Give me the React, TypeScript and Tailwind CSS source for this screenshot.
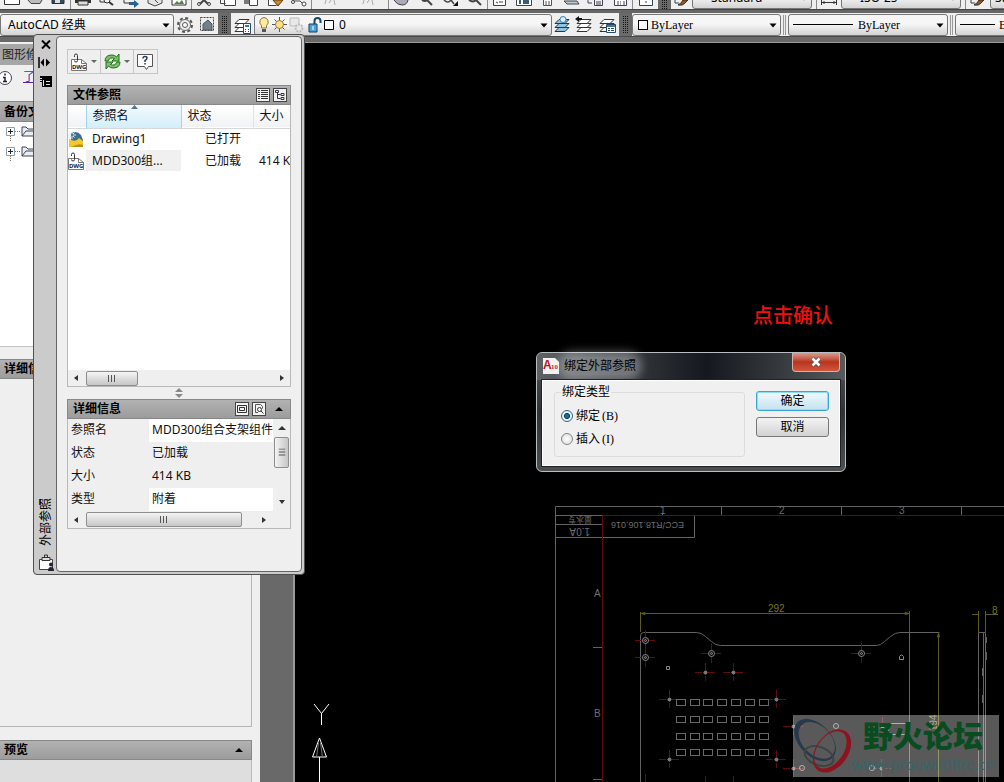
import React from "react";

const UI = "font-['Noto_Sans','Noto_Sans_CJK_SC',sans-serif]";
const SERIF = "font-['Liberation_Serif','Noto_Sans_CJK_SC',serif]";

function Down({ className = "" }: { className?: string }) {
  return (
    <svg className={className} width="8" height="5" viewBox="0 0 8 5" aria-hidden="true">
      <path d="M0.5 0.5h7L4 4.5z" fill="#000" />
    </svg>
  );
}

function Arrow({ dir, color = "#333" }: { dir: "up" | "down" | "left" | "right"; color?: string }) {
  const d = {
    up: "M0 6L4 2L8 6z",
    down: "M1 2L4 6L7 2z",
    left: "M6 1L2 4L6 7z",
    right: "M2 1L6 4L2 7z",
  }[dir];
  return (
    <svg width="8" height="8" viewBox="0 0 8 8" aria-hidden="true">
      <path d={d} fill={color} />
    </svg>
  );
}

function Combo({
  label,
  value,
  className = "",
  selectClass = "",
  children,
}: {
  label: string;
  value: string;
  className?: string;
  selectClass?: string;
  children?: React.ReactNode;
}) {
  return (
    <div className={`relative h-[22px] shrink-0 ${className}`}>
      <select
        aria-label={label}
        className={`block h-full w-full appearance-none rounded-[3px] border border-[#777] bg-linear-to-b from-[#f6f6f6] from-45% to-[#d3d3d3] text-xs text-black ${selectClass}`}
      >
        <option>{value}</option>
      </select>
      <div className="pointer-events-none absolute inset-y-0 left-0 flex items-center">{children}</div>
      <Down className="pointer-events-none absolute top-[9px] right-1" />
    </div>
  );
}

function Grip() {
  return (
    <div className="flex h-full w-[13px] shrink-0 items-center justify-center bg-[#6a6a6a]">
      <svg width="7" height="18" viewBox="0 0 7 18" aria-hidden="true">
        <path d="M1.5 0v18M3.5 0v18M5.5 0v18" stroke="#151515" strokeDasharray="1 1" />
      </svg>
    </div>
  );
}

function Rule() {
  return <div className="h-full w-px shrink-0 bg-[#8a8a8a]" />;
}

const topGroups: { width: string; icons: React.ReactNode[] }[] = [
  {
    width: "w-[70px]",
    icons: [
      <path key="new" d="M1.500 0v4.500h15V0" fill="#fff" stroke="#333" />,
      <path key="open" d="M2 0l3 3.500h9L16 0" fill="#bbb" stroke="#444" />,
      <g key="save">
        <path d="M3 0v3.500h12V0" fill="#34495e" stroke="#233" />
        <path d="M6 0h5v3H6z" fill="#ddd" />
      </g>,
    ],
  },
  {
    width: "w-[120px]",
    icons: [
      <g key="print">
        <path d="M1 0h16v3H1z" fill="#333" />
        <path d="M4 1h10v4H4z" fill="#ddd" stroke="#333" />
      </g>,
      <g key="preview" fill="none" stroke="#333">
        <path d="M2 0v2h5" />
        <circle cx="9" cy="0" r="3" />
        <path d="M11 2l4 3" strokeWidth="2" />
      </g>,
      <g key="publish">
        <path d="M2 0v3h6" fill="none" stroke="#333" />
        <path d="M7 2h5v-2l5 4-5 4V5H7z" fill="#2a5f8e" />
      </g>,
      <path key="dwf" d="M2 0v3l7 3 7-3V0M9 0l3 3" fill="#e5e5e5" stroke="#444" />,
      <g key="image">
        <path d="M2 0v5h14V0" fill="#fff" stroke="#333" />
        <path d="M4 4l3-3 2 2 3-3 2 4z" fill="#458a3c" />
      </g>,
    ],
  },
  {
    width: "w-[119px]",
    icons: [
      <g key="cut" fill="none" stroke="#444" strokeWidth="2">
        <path d="M9 0L5 4M9 0l4 4" />
        <circle cx="4" cy="4" r="1.500" strokeWidth="1" />
        <circle cx="14" cy="4" r="1.500" strokeWidth="1" />
      </g>,
      <path key="copy" d="M1.500 0v3.500h5M5.500 0v5.500h11V0" fill="#fff" stroke="#444" />,
      <g key="paste">
        <path d="M2 0h7v4H2z" fill="#777" />
        <path d="M7.500 0v5.500h8V0" fill="#fff" stroke="#444" />
      </g>,
      <g key="match">
        <path d="M2.500 0v5.500h8" fill="#fff" stroke="#444" />
        <path d="M7 0l5 6 5-6z" fill="#c98a2b" stroke="#5b3a10" />
      </g>,
      <g key="block" fill="#fff" stroke="#444">
        <path d="M2 1h8l3 3" />
        <circle cx="3" cy="2" r="1.500" />
        <circle cx="14" cy="4" r="2" />
      </g>,
    ],
  },
  {
    width: "w-[76px]",
    icons: [
      <path key="undo" d="M4 0L3 4M9 0L7 3M12 0l1 5" fill="none" stroke="#aaa" />,
      <path key="redo" d="M4 0L3 4M9 0L7 3M12 0l1 5" fill="none" stroke="#aaa" />,
    ],
  },
  {
    width: "w-[98px]",
    icons: [
      <path key="pan" d="M2 0q3 5 8 5q5 0 6-5" fill="#aab" stroke="#444" />,
      <path key="zoom" d="M5 0q3 2 5 0l5 5" fill="none" stroke="#444" strokeWidth="2" />,
      <g key="window">
        <path d="M3 0q4 4 7 0l3 4" fill="none" stroke="#444" strokeWidth="1.500" />
        <path d="M17 1v5h-5z" fill="#111" />
      </g>,
      <path key="previous" d="M3 0q4 3 7 0l5 5" fill="none" stroke="#444" strokeWidth="2" />,
    ],
  },
  {
    width: "w-[144px]",
    icons: [
      <path key="properties" d="M2.500 0v5.500h12V0M5 2l2 1M8 2h4" fill="#fff" stroke="#444" />,
      <g key="center">
        <path d="M1.500 0v5.500h15V0" fill="#fff" stroke="#445" />
        <path d="M4 0h2v4H4zM8 0h6v4H8z" fill="#3c5a7a" />
      </g>,
      <path key="tools" d="M4.500 0v5.500h8V0M6 2h2M9 2h2M6 4h2M9 4h2" fill="#fff" stroke="#555" />,
      <path key="sheet" d="M1 1l3 3h12l-2-3z" fill="#bcc" stroke="#445" />,
      <path key="markup" d="M1 0v3h4M7.500 0v5.500h8V0M9 2h5M9 4h5" fill="none" stroke="#445" />,
      <path key="calc" d="M3.500 0v5.500h12V0M6 2h2M9 2h1M12 2h2M6 4h2M9 4h1M12 4h2" fill="#fff" stroke="#445" />,
    ],
  },
  {
    width: "w-[25px]",
    icons: [<path key="help" d="M2.500 0v5.500h13V0M9 1v2" fill="#fff" stroke="#345" />],
  },
];

function Brush() {
  return (
    <svg width="16" height="9" viewBox="0 0 16 9" aria-hidden="true">
      <path d="M1 0v3h4" fill="none" stroke="#345" />
      <path d="M4 5q5 1 7-2l3-3H9Q8 3 4 5z" fill="#8a5a32" stroke="#4a2b12" />
    </svg>
  );
}

function StandardBar() {
  return (
    <div className="flex h-[9px] shrink-0 items-end overflow-hidden bg-[#efefef]">
      {topGroups.map((g, i) => (
        <React.Fragment key={i}>
          {i > 0 && <Rule />}
          <div className={`flex shrink-0 justify-around ${g.width}`}>
            {g.icons.map((icon, j) => (
              <button key={j} aria-label="工具" className="h-[9px] w-[18px]">
                <svg width="18" height="9" viewBox="0 0 18 9" aria-hidden="true">
                  {icon}
                </svg>
              </button>
            ))}
          </div>
        </React.Fragment>
      ))}
      <Grip />
      <div className="flex w-[21px] shrink-0 justify-center"><Brush /></div>
      <Combo label="文字样式" value="Standard" className="w-[120px]" selectClass={`pl-[18px] ${UI}`} />
      <div className="ml-1 flex w-[25px] shrink-0 justify-center border-l border-[#8a8a8a]">
        <svg width="18" height="9" viewBox="0 0 18 9" aria-hidden="true">
          <path d="M1.500 0v5M16.500 0v5M2 2.500h14M4 1v3M14 1v3" stroke="#333" />
        </svg>
      </div>
      <Combo label="标注样式" value="ISO-25" className="w-[120px]" selectClass={`pl-[18px] ${UI}`} />
      <div className="ml-1 flex w-[25px] shrink-0 justify-center border-l border-[#8a8a8a]"><Brush /></div>
      <Combo label="表格样式" value="Standard" className="w-[120px]" selectClass={`pl-1 ${UI}`} />
    </div>
  );
}

function Layers({ kind }: { kind: "props" | "current" | "previous" | "states" }) {
  const fill = kind === "current" ? "#8fc4e6" : "#fff";
  return (
    <svg width="20" height="20" viewBox="0 0 20 20" aria-hidden="true">
      <g fill={fill} stroke="#333">
        <path d="M2 16.500h10l4-4H6z" />
        <path d="M2 12.500h10l4-4H6z" />
        <path d="M2 8.500h10l4-4H6z" />
      </g>
      {kind === "current" && <circle cx="10" cy="4.500" r="3" fill="#dceefa" stroke="#3b7fae" />}
      {kind === "previous" && <path d="M0 4l4-3v2h3v2H4v2z" fill="#111" />}
      {kind === "props" && (
        <g>
          <path d="M10.500 8.500h7v10h-7z" fill="#fff" stroke="#234a70" />
          <path d="M12 10h4v2h-4z" fill="#3a78ad" />
          <path d="M12 14.500h1M15 14.500h1M12 16.500h1M15 16.500h1" stroke="#234a70" />
        </g>
      )}
      {kind === "states" && (
        <g>
          <path d="M8.500 9.500h9v8h-9z" fill="#fff" stroke="#234a70" />
          <path d="M9 10h8v2H9z" fill="#4e7394" />
          <path d="M10 13.500h2M13 13.500h3M10 15.500h2M13 15.500h3" stroke="#234a70" />
        </g>
      )}
    </svg>
  );
}

function PropertyBar() {
  return (
    <div className="flex h-[23px] shrink-0 items-center overflow-hidden bg-[#efefef]">
      <Combo label="工作空间" value="AutoCAD 经典" className="w-[174px]" selectClass={`pl-[7px] ${UI}`} />
      <button aria-label="工作空间设置" className="flex h-full w-[22px] shrink-0 items-center justify-center">
        <svg width="18" height="18" viewBox="0 0 18 18" fill="none" aria-hidden="true">
          <circle cx="9" cy="9" r="7" stroke="#555" strokeWidth="2" strokeDasharray="3 2.500" />
          <circle cx="9" cy="9" r="5.500" fill="#eee" stroke="#666" />
          <circle cx="9" cy="9" r="2.500" fill="#fff" stroke="#555" />
        </svg>
      </button>
      <button aria-label="我的工作空间" className="flex h-full w-[22px] shrink-0 items-center justify-center">
        <svg width="17" height="17" viewBox="0 0 17 17" aria-hidden="true">
          <path d="M1.500 1.500h13v13h-13z" fill="none" stroke="#444" strokeDasharray="2 1" />
          <path d="M4 8l5-4 4 4v6H4z" fill="#71808a" stroke="#555" />
        </svg>
      </button>
      <Grip />
      <div className="flex h-full w-[23px] shrink-0 items-center justify-center"><Layers kind="props" /></div>
      <Combo label="图层" value="0" className="w-[298px]" selectClass={`pl-[84px] ${UI}`}>
        <svg className="ml-[3px]" width="78" height="18" viewBox="0 0 78 18" aria-hidden="true">
          <path d="M7 1.500a4.500 4.500 0 0 0-2.500 8v2.500h5V9.500A4.500 4.500 0 0 0 7 1.500z" fill="#ffeaa0" stroke="#8a7434" />
          <path d="M5 13h4v3H5z" fill="#555" />
          <g stroke="#555">
            <path d="M22.500 1v15M15 8.500h15M17.500 3.500l10 10M27.500 3.500l-10 10" />
            <circle cx="22.500" cy="8.500" r="4" fill="#ffdf8a" stroke="#9a7b30" />
          </g>
          <g fill="#e8e8e8" stroke="#bbb">
            <path d="M33 2h9v8h-9z" />
            <circle cx="42" cy="12" r="3.500" strokeDasharray="2 1" strokeWidth="2" />
          </g>
          <path d="M52 8h8v8h-8z" fill="#4aa6d8" stroke="#163f5c" />
          <path d="M57.500 8V5q0-3 3-3t3 3v2" fill="none" stroke="#16496d" strokeWidth="2" />
          <path d="M56 10v4" stroke="#fff" />
          <path d="M67.500 4.500h9v9h-9z" fill="#fff" stroke="#000" />
        </svg>
      </Combo>
      <div className="flex h-full w-[67px] shrink-0 items-center justify-around bg-[#efefef]">
        <button aria-label="置为当前图层"><Layers kind="current" /></button>
        <button aria-label="上一个图层"><Layers kind="previous" /></button>
        <button aria-label="图层状态管理器"><Layers kind="states" /></button>
      </div>
      <Grip />
      <Combo label="颜色" value="ByLayer" className="w-[149px]" selectClass={`pl-[18px] ${SERIF}`}>
        <div className="ml-[6px] size-[10px] border border-black bg-white" />
      </Combo>
      <div className="mx-[2px] h-5 w-[3px] shrink-0 border-x border-[#999]" />
      <Combo label="线型" value="ByLayer" className="w-[160px]" selectClass={`pl-[69px] ${SERIF}`}>
        <div className="ml-[5px] h-px w-[60px] bg-black" />
      </Combo>
      <div className="mx-[2px] h-5 w-[3px] shrink-0 border-x border-[#999]" />
      <Combo label="线宽" value="ByLayer" className="w-[160px]" selectClass={`pl-[43px] ${SERIF}`}>
        <div className="ml-[5px] h-px w-[35px] bg-black" />
      </Combo>
    </div>
  );
}

const bar = "flex shrink-0 items-center border-y border-[#888] bg-linear-to-b from-[#b2b2b2] to-[#9c9c9c] text-xs font-bold text-black";

function TreeFolder() {
  return (
    <div className="flex h-5 items-center pl-[6px]">
      <svg width="28" height="20" viewBox="0 0 28 20" aria-hidden="true">
        <path d="M9 9.500h6M4.500 14v6" stroke="#777" strokeDasharray="1 1" />
        <path d="M0.500 5.500h8v8h-8z" fill="#fff" stroke="#8ba0b0" />
        <path d="M2 9.500h5M4.500 7v5" stroke="#223" />
        <path d="M16 14V5h4l2 2h6v7z" fill="#e8eef2" stroke="#445" />
        <path d="M16 14l4-5h8" fill="none" stroke="#445" />
      </svg>
    </div>
  );
}

function RecoveryPanel() {
  return (
    <aside className={`flex w-[260px] shrink-0 flex-col overflow-hidden bg-[#efefef] pt-[2px] pr-2 text-xs ${UI}`}>
      <h2 className="flex h-[21px] shrink-0 items-center bg-[#a6a6a6] pl-[2px] text-[#222]">图形修</h2>
      <div className="flex h-9 shrink-0 items-start gap-[10px] pt-1">
        <svg className="-ml-px" width="14" height="18" viewBox="0 0 14 18" aria-hidden="true">
          <circle cx="6" cy="9" r="6.500" fill="#fff" stroke="#445" />
          <path d="M6 4.500v2M4 8.500h2v4M4 12.500h4" stroke="#223" strokeWidth="1.500" fill="none" />
        </svg>
        <a href="#recovery" className="text-[#5a1fa8] underline">了</a>
      </div>
      <h3 className={`${bar} h-[21px] pl-1`}>备份文</h3>
      <div className="h-[225px] shrink-0 border-r border-b border-[#c4c4c4] bg-white">
        <TreeFolder />
        <TreeFolder />
      </div>
      <h3 className={`${bar} mt-3 h-5 pl-1`}>详细信</h3>
      <div className="flex-1 border-r border-b border-[#b5b5b5]" />
      <h3 className={`${bar} mt-[13px] h-5 justify-between border-r pr-2 pl-1`}>
        预览
        <Arrow dir="up" color="#000" />
      </h3>
      <div className="h-[22px] shrink-0 border-r border-[#bbb] bg-[#dedede]" />
    </aside>
  );
}

function DwgIcon() {
  return (
    <svg width="17" height="18" viewBox="0 0 17 18" aria-hidden="true">
      <path d="M0.500 17.500v-11h10l5 4v7z" fill="#fff" stroke="#777" />
      <path d="M10.500 6.500v4h5" fill="none" stroke="#777" />
      <path d="M3.500 4V2.500q0-1.500 1.500-1.500t1.500 1.500v5q0 1.500-1.500 1.500T3.500 7.500" fill="none" stroke="#333" />
      <text x="1" y="16" fontSize="6" fontWeight="bold" fill="#123" className={UI}>DWG</text>
    </svg>
  );
}

function DrawingIcon() {
  return (
    <svg width="17" height="17" viewBox="0 0 17 17" aria-hidden="true">
      <path d="M3 16V2q6-3 10 2l2 5v7z" fill="#3c6f8f" />
      <path d="M1 16V8q7 4 10-1l4 3v6z" fill="#f4c92b" />
      <path d="M3 16q8-4 12-2v2z" fill="#b8901a" />
      <path d="M4 0v8M0 4h8M1.500 1.500l5 5M6.500 1.500l-5 5" stroke="#dceaf4" />
      <circle cx="4" cy="4" r="1" fill="#356" />
    </svg>
  );
}

function Thumb({ className = "", vertical = false }: { className?: string; vertical?: boolean }) {
  return (
    <div className={`flex items-center justify-center rounded-[2px] border border-[#8e8e8e] ${vertical ? "bg-linear-to-r" : "bg-linear-to-b"} from-[#f4f4f4] to-[#c6c6c6] ${className}`}>
      <svg className={vertical ? "rotate-90" : ""} width="8" height="7" viewBox="0 0 8 7" aria-hidden="true">
        <path d="M0.500 0v7M3.500 0v7M6.500 0v7" stroke="#555" />
      </svg>
    </div>
  );
}

const smallButton = "flex size-[14px] items-center justify-center border border-[#444] bg-[#f2f2f2]";
const toolButton = "flex h-[25px] items-center justify-center border border-[#c6c6c6]";

const details = [
  { name: "参照名", value: "MDD300组合支架组件", editable: true },
  { name: "状态", value: "已加载", editable: false },
  { name: "大小", value: "414 KB", editable: false },
  { name: "类型", value: "附着", editable: true },
];

function ReferencePalette() {
  return (
    <section className={`absolute top-[34px] left-[33px] flex h-[541px] w-[272px] rounded-[4px] border border-[#505050] bg-[#cbcbcb] pt-px pr-[2px] pb-[2px] text-xs text-[#111] ${UI}`}>
      <div className="flex w-[22px] shrink-0 flex-col items-center pt-1 pl-[2px]">
        <button aria-label="关闭" className="h-[9px]">
          <svg width="10" height="9" viewBox="0 0 10 9" aria-hidden="true">
            <path d="M1 0.500l8 8M9 0.500l-8 8" stroke="#000" strokeWidth="2" />
          </svg>
        </button>
        <button aria-label="自动隐藏" className="mt-2 -ml-1 h-[11px]">
          <svg width="13" height="11" viewBox="0 0 13 11" aria-hidden="true">
            <path d="M1 0v11" stroke="#000" strokeWidth="1.500" />
            <path d="M6 1.500v8L2.500 5.500zM8 1.500v8l4-4z" fill="#000" />
          </svg>
        </button>
        <button aria-label="特性" className="mt-2 h-[11px]">
          <svg width="12" height="11" viewBox="0 0 12 11" aria-hidden="true">
            <path d="M0 0h12v11H2V6H0z" fill="#000" />
            <path d="M0 2.500h2M0 4.500h2M3.500 4v6M6 5.500h4M6 8.500h4" stroke="#ddd" />
          </svg>
        </button>
        <h2 className="mt-auto rotate-180 text-xs leading-4 text-black [text-orientation:sideways] [writing-mode:vertical-rl]">外部参照</h2>
        <svg className="mt-2" width="17" height="18" viewBox="0 0 17 18" aria-hidden="true">
          <path d="M1.500 5.500h13v10h-13z" fill="#fff" stroke="#444" />
          <path d="M4 3.500h8v3H4z" fill="#ddd" stroke="#333" />
          <path d="M6.500 3.500V1h3v2.500" fill="none" stroke="#333" />
          <circle cx="13" cy="10.500" r="2" fill="#223" />
          <path d="M10 17q0-4 3-4t3 4z" fill="#223" />
        </svg>
      </div>

      <div className="flex min-w-0 flex-1 flex-col rounded-[4px] border border-[#666] bg-[#efefef] px-[10px] pt-3">
        <div className="flex">
          <button aria-label="附着 DWG" className={`${toolButton} w-[34px] gap-[3px]`}>
            <DwgIcon />
            <svg width="6" height="4" viewBox="0 0 6 4" aria-hidden="true"><path d="M0 0h6L3 3z" fill="#666" /></svg>
          </button>
          <button aria-label="刷新" className={`${toolButton} -ml-px w-[34px] gap-[3px]`}>
            <svg width="17" height="17" viewBox="0 0 17 17" aria-hidden="true">
              <path d="M1 8q0-6 7-6 3 0 4.500 2L15 1v7H8l2.500-2.500Q6 3.500 4 8z" fill="#79c46a" stroke="#246b1e" />
              <path d="M16 9q0 6-7 6-3 0-4.500-2L2 16V9h7l-2.500 2.500Q11 13.500 13 9z" fill="#79c46a" stroke="#246b1e" />
            </svg>
            <svg width="6" height="4" viewBox="0 0 6 4" aria-hidden="true"><path d="M0 0h6L3 3z" fill="#666" /></svg>
          </button>
          <button aria-label="帮助" className={`${toolButton} -ml-px w-[25px]`}>
            <svg width="17" height="18" viewBox="0 0 17 18" aria-hidden="true">
              <path d="M0.500 1.500h15v12h-4l-2 3-2-3h-7z" fill="#fff" stroke="#555" />
              <path d="M6 5.500q0-2 2-2t2 1.500-2 2.500v1.500M8 10v1.500" fill="none" stroke="#2c3f55" strokeWidth="1.500" />
            </svg>
          </button>
        </div>

        <h3 className={`${bar} mt-[11px] h-5 gap-[3px] border-x pr-[3px] pl-[5px]`}>
          <span className="mr-auto">文件参照</span>
          <button aria-label="列表图" className={smallButton}>
            <svg width="10" height="10" viewBox="0 0 10 10" aria-hidden="true">
              <path d="M0 0.500h2M3 0.500h7M0 2.500h2M3 2.500h7M0 4.500h2M3 4.500h7M0 6.500h2M3 6.500h7M0 8.500h2M3 8.500h7" stroke="#333" />
            </svg>
          </button>
          <button aria-label="树状图" className={smallButton}>
            <svg width="10" height="10" viewBox="0 0 10 10" fill="none" aria-hidden="true">
              <path d="M0.500 0.500h3v2h-3zM2.500 3v5.500h3M2.500 4.500h3M6 3.500h3v2H6zM6 7.500h3v2H6z" stroke="#334" />
            </svg>
          </button>
        </h3>
        <div className="flex h-[282px] shrink-0 flex-col overflow-hidden border border-t-0 border-[#b9b9b9] bg-white">
          <table className="w-[260px] table-fixed border-collapse text-left">
            <colgroup>
              <col className="w-[18px]" />
              <col className="w-[95px]" />
              <col className="w-[72px]" />
              <col className="w-[75px]" />
            </colgroup>
            <thead>
              <tr className="h-[23px] border-b border-[#d8d8d8] bg-linear-to-b from-white to-[#f1f2f4]">
                <th className="p-0" aria-label="图标" />
                <th className="border-x border-[#9fd8ee] bg-linear-to-b from-[#f2fafd] to-[#d3eefa] p-0 pl-[6px] font-normal">
                  <div className="relative">
                    参照名
                    <svg className="absolute -top-[3px] left-[38px]" width="7" height="4" viewBox="0 0 7 4" aria-hidden="true"><path d="M0 4L3.500 0 7 4z" fill="#5a7486" /></svg>
                  </div>
                </th>
                <th className="border-r border-[#e2e2e2] p-0 pl-[6px] font-normal">状态</th>
                <th className="p-0 pl-[6px] font-normal">大小</th>
              </tr>
            </thead>
            <tbody>
              <tr className="h-[22px]">
                <td className="p-0"><DrawingIcon /></td>
                <td className="p-0 pl-[6px]">Drawing1</td>
                <td className="p-0 pl-6">已打开</td>
                <td />
              </tr>
              <tr className="h-[21px]">
                <td className="p-0"><DwgIcon /></td>
                <td className="bg-[#f0f0f0] p-0 pl-[6px]">MDD300组...</td>
                <td className="p-0 pl-6">已加载</td>
                <td className="p-0 pl-[6px]">414 K</td>
              </tr>
            </tbody>
          </table>
          <div className="mt-auto flex h-4 shrink-0 items-center bg-[#efefef] px-1">
            <Arrow dir="left" />
            <Thumb className="ml-[6px] h-[15px] w-[52px]" />
            <div className="ml-auto flex"><Arrow dir="right" /></div>
          </div>
        </div>

        <div className="flex h-3 shrink-0 flex-col items-center justify-center">
          <svg width="8" height="10" viewBox="0 0 8 10" aria-hidden="true">
            <path d="M0 4L4 0l4 4zM0 6l4 4 4-4z" fill="#888" />
          </svg>
        </div>

        <h3 className={`${bar} h-5 gap-[3px] border-x pr-[7px] pl-[5px]`}>
          <span className="mr-auto">详细信息</span>
          <button aria-label="详细信息" className={smallButton}>
            <svg width="10" height="10" viewBox="0 0 10 10" fill="none" aria-hidden="true">
              <path d="M0.500 1.500h9v7h-9zM2.500 3.500h5v3h-5z" stroke="#333" />
            </svg>
          </button>
          <button aria-label="预览" className={smallButton}>
            <svg width="10" height="10" viewBox="0 0 10 10" fill="none" aria-hidden="true">
              <path d="M4 8.500H1.500v-8h5l2 2v2" stroke="#555" />
              <circle cx="5.500" cy="5.500" r="2" stroke="#333" />
              <path d="M7 7l2.500 2.500" stroke="#333" />
            </svg>
          </button>
          <span className="ml-[6px]"><Arrow dir="up" color="#000" /></span>
        </h3>
        <div className="shrink-0 border border-t-0 border-[#b9b9b9]">
          <div className="flex">
            <table className="min-w-0 flex-1 table-fixed border-collapse text-left">
              <tbody>
                {details.map((d) => (
                  <tr key={d.name} className="h-[23px]">
                    <th className="w-[81px] p-0 pb-[2px] pl-[3px] font-normal">{d.name}</th>
                    <td className={d.editable ? "bg-white p-0 pb-[2px]" : "p-0 pb-[2px]"}>
                      <div className="w-[124px] overflow-hidden pl-[3px] whitespace-nowrap">{d.value}</div>
                    </td>
                  </tr>
                ))}
              </tbody>
            </table>
            <div className="flex w-[17px] shrink-0 flex-col items-center py-[5px]">
              <Arrow dir="up" />
              <Thumb vertical className="mt-[5px] h-[31px] w-[15px]" />
              <div className="mt-auto"><Arrow dir="down" /></div>
            </div>
          </div>
          <div className="flex h-[17px] items-center pr-[22px] pl-1">
            <Arrow dir="left" />
            <Thumb className="ml-[6px] h-[15px] w-[156px]" />
            <div className="ml-auto flex"><Arrow dir="right" /></div>
          </div>
        </div>
      </div>
    </section>
  );
}

const slotColumns = [676, 690, 703, 717, 731, 745, 759];
const slotRows = [699, 716, 733, 749];
const bigHoles = [[645, 640], [645, 657], [711, 653], [861, 653]];
const smallHoles = [[705, 672], [733, 672], [669, 699], [669, 759], [776, 699], [776, 759], [793, 726], [882, 726], [881, 768], [793, 768]];
const plainHoles = [[836, 726], [802, 768], [872, 768]];

function Drawing() {
  return (
    <svg
      className="absolute inset-0 h-full w-full"
      viewBox="295 43 709 739"
      preserveAspectRatio="xMinYMin slice"
      fill="none"
      aria-hidden="true"
    >
      <g stroke="#fff">
        <path d="M314 704l7.500 9.500L329 704M321.500 713v12" />
        <path d="M319.500 738l-7 19h14zM319.500 757v25" />
        <path d="M318.500 743l-2 14M320.500 743l2 14" stroke="#777" />
      </g>
      <g stroke="#626262">
        <path d="M555.500 782V506.500H1004M721.500 506v9M841.500 506v9M961.500 506v9M662.500 513v2" />
        <path d="M555 515.500h47M555 524.500h47M555 537.500h139.500V516M593 647.500h9M593 779.500h9" />
        <path d="M640.500 782V636q0-3.500 3-3.500h53q5 0 9 4l6 5q4 4 9 4h156q4 0 8-4l6-5q5-4 9-4h40M909.500 632v150" />
        <path d="M978.500 782V632.500h7V782M983.500 633v149M986.500 637v6M986.500 652v8M982.500 668v8M982.500 695v8" />
        <path d="M909 723.500h-16q-5 0-5 5.500t5 5.500h16" stroke="#888" />
      </g>
      <g stroke="#640c0c">
        <path d="M602.500 782V515.500H1004" />
        {bigHoles.map(([x, y]) => (
          <path key={`${x}-${y}`} d={`M${x - 10} ${y + 0.5}h20M${x + 0.5} ${y - 10}v20`} strokeDasharray="7 1 4 1" />
        ))}
        {smallHoles.map(([x, y]) => (
          <path key={`${x}-${y}`} d={`M${x - 10} ${y + 0.5}h20M${x + 0.5} ${y - 9}v18`} strokeDasharray="7 1 4 1" />
        ))}
        <path d="M705.500 776v6M733.500 776v6M645.500 774v8" />
      </g>
      <g stroke="#5c5c18">
        <path d="M640.500 632v-20M640 613.500h270M909.500 611v21M938.500 632v150M978.500 632v-21M985.500 632v-21M972 614.500h6M986 614.500h12" />
        <path d="M641 613.500l4-1v2zM909 613.500l-4-1v2zM938.500 633l-1 4h2z" fill="#5c5c18" />
      </g>
      <g stroke="#8a8a8a">
        {bigHoles.map(([x, y]) => (
          <g key={`${x}-${y}`}>
            <circle cx={x + 0.5} cy={y + 0.5} r="3" />
            <circle cx={x + 0.5} cy={y + 0.5} r="1" />
          </g>
        ))}
        {smallHoles.map(([x, y]) => (
          <circle key={`${x}-${y}`} cx={x + 0.5} cy={y + 0.5} r="1.500" fill="#777" />
        ))}
        {plainHoles.map(([x, y]) => (
          <circle key={`${x}-${y}`} cx={x} cy={y} r="2.500" />
        ))}
        <path d="M666.500 666.500h3v3h-3zM899.500 659.500v-3l1.500-1.500h1l1.500 1.500v3z" />
      </g>
      <g stroke="#686868">
        {slotRows.map((y) =>
          slotColumns.map((x) => <rect key={`${x}-${y}`} x={x + 0.5} y={y + 0.5} width="9" height="6" />)
        )}
      </g>
      <g fill="#6e6e6e" fontSize="10" className="font-['Liberation_Sans_Narrow','Liberation_Sans','Noto_Sans_CJK_SC',sans-serif]">
        <text x="660" y="514">1</text>
        <text x="779" y="514">2</text>
        <text x="899" y="514">3</text>
        <text x="594" y="597">A</text>
        <text x="594" y="717">B</text>
        <text transform="translate(592 517) rotate(180)" fontSize="8">量水专</text>
        <text transform="translate(590 528) rotate(180)">1.0A</text>
        <text transform="translate(684 522) rotate(180)" fontSize="9">ECC/R18.106.016</text>
        <text x="768" y="612" fill="#77771c">292</text>
        <text x="992" y="614" fill="#77771c">8</text>
        <text transform="translate(937 731) rotate(-90)" fill="#88884c">194</text>
      </g>
    </svg>
  );
}

function Watermark() {
  return (
    <div className={`absolute right-[5px] bottom-[5px] flex h-[62px] w-[206px] bg-white/35 ${UI}`}>
      <svg className="shrink-0" width="60" height="62" viewBox="0 0 60 62" fillRule="evenodd" aria-hidden="true">
        <g transform="rotate(46 22 25)" fill="#27394c">
          <path d="M-3 25a25 16 0 1 0 50 0a25 16 0 1 0-50 0zM2 24a21 14 0 1 0 43 0a21 14 0 1 0-43 0z" />
        </g>
        <ellipse cx="26" cy="41" rx="15" ry="9" transform="rotate(20 26 41)" fill="none" stroke="#3c4443" strokeWidth="2" />
        <g transform="rotate(-54 39 36)" fill="#8c1420">
          <path d="M15 36a24 16 0 1 0 48 0a24 16 0 1 0-48 0zM18 34a21 13 0 1 0 42 0a21 13 0 1 0-42 0z" />
        </g>
      </svg>
      <div className="-ml-[2px] flex flex-col">
        <span className="pl-3 text-[30px] leading-[41px] font-black whitespace-nowrap text-[#084c20]">野火论坛</span>
        <span className="text-[15px] leading-4 whitespace-nowrap text-[#34666a]">www.proewildfire.cn</span>
      </div>
    </div>
  );
}

function BindDialog() {
  return (
    <div
      role="dialog"
      aria-labelledby="bind-title"
      className={`absolute top-[352px] left-[536px] flex w-[310px] flex-col rounded-md border border-[#b9bec1] bg-linear-to-b from-[#54585b] via-[#303335] to-[#4c5053] px-[5px] pb-[5px] text-xs text-black ${SERIF}`}
    >
      <div className="-mx-[5px] flex h-[27px] items-start rounded-t-md bg-linear-to-r from-[#5f6366] via-[#15191f] via-55% to-[#565a5d] pr-[5px] pl-[6px]">
        <svg className="mt-[5px]" width="17" height="17" viewBox="0 0 17 17" aria-hidden="true">
          <path d="M0 0h12l4 4v12H0z" fill="#f2f2f2" />
          <text x="0" y="11" fontSize="12" fontWeight="bold" fill="#c0121f" className="font-['Liberation_Sans',sans-serif]">A</text>
          <text x="8" y="11" fontSize="7" fontWeight="bold" fill="#c0121f" className={SERIF}>10</text>
        </svg>
        <h2 id="bind-title" className="mt-1 ml-1 rounded-full bg-white/30 leading-[18px] shadow-[0_0_8px_6px_rgba(255,255,255,0.3)]">绑定外部参照</h2>
        <button aria-label="关闭" className="ml-auto flex h-[19px] w-12 items-center justify-center rounded-b-[4px] border border-t-0 border-[#d6b0a8] bg-linear-to-b from-[#d79a8c] via-[#b8331d] via-50% to-[#d0563c]">
          <svg width="12" height="10" viewBox="0 0 12 10" aria-hidden="true">
            <path d="M2.500 1.500l7 7M9.500 1.500l-7 7" stroke="#555" strokeWidth="4" />
            <path d="M2.500 1.500l7 7M9.500 1.500l-7 7" stroke="#fff" strokeWidth="2.500" />
          </svg>
        </button>
      </div>
      <form className="flex h-[86px] border border-white bg-[#f0f0f0] ring-1 ring-[#222]" onSubmit={(e) => e.preventDefault()}>
        <fieldset className="mt-[3px] mb-2 ml-[11px] w-[191px] rounded-[3px] border border-[#dcdcdc] px-[6px]">
          <legend className="px-px leading-4">绑定类型</legend>
          <div className="flex flex-col gap-[5px] pt-[7px]">
            {["绑定(B)", "插入(I)"].map((text, i) => (
              <label key={text} className="flex h-[18px] items-center gap-[3px]">
                <input
                  type="radio"
                  name="bind"
                  defaultChecked={i === 0}
                  className="size-3 appearance-none rounded-full border border-[#858585] bg-[radial-gradient(circle,#fff,#d8d8d8)] checked:border-[#3a6286] checked:bg-[radial-gradient(circle,#1c6c9c_0_20%,#12364f_38%,#e4f1f8_46%)]"
                />
                <span>
                  {text.slice(0, 2)}
                  <span className="ml-[2px]">{text.slice(2)}</span>
                </span>
              </label>
            ))}
          </div>
        </fieldset>
        <div className="mt-[10px] ml-[11px] flex flex-col gap-[6px]">
          <button type="submit" className="h-5 w-[73px] rounded-[3px] border border-[#3aa5d0] bg-linear-to-b from-[#f2fafd] to-[#c3e2f0] leading-[16px] ring-1 ring-[#8fdcf5] ring-inset">确定</button>
          <button type="button" className="h-5 w-[73px] rounded-[3px] border border-[#777] bg-linear-to-b from-[#f4f4f4] to-[#d2d2d2] leading-[16px]">取消</button>
        </div>
      </form>
    </div>
  );
}

export default function App() {
  return (
    <div className="relative flex h-screen flex-col overflow-hidden bg-[#696969]">
      <StandardBar />
      <div className="h-1 shrink-0 border-t border-[#444] bg-[#666]" />
      <PropertyBar />
      <div className="h-[6px] shrink-0 border-t border-[#4a4a4a]" />
      <div className="flex min-h-0 flex-1">
        <RecoveryPanel />
        <div className="w-[33px] shrink-0 bg-[#696969]" />
        <main className="relative min-w-0 flex-1 overflow-hidden border-t border-l-2 border-[#9a9a9a] bg-black">
          <Drawing />
          <Watermark />
        </main>
      </div>
      <p className={`absolute top-[304px] left-[753px] text-[20px] leading-6 font-medium text-[#f01010] ${UI}`}>点击确认</p>
      <BindDialog />
      <ReferencePalette />
    </div>
  );
}
